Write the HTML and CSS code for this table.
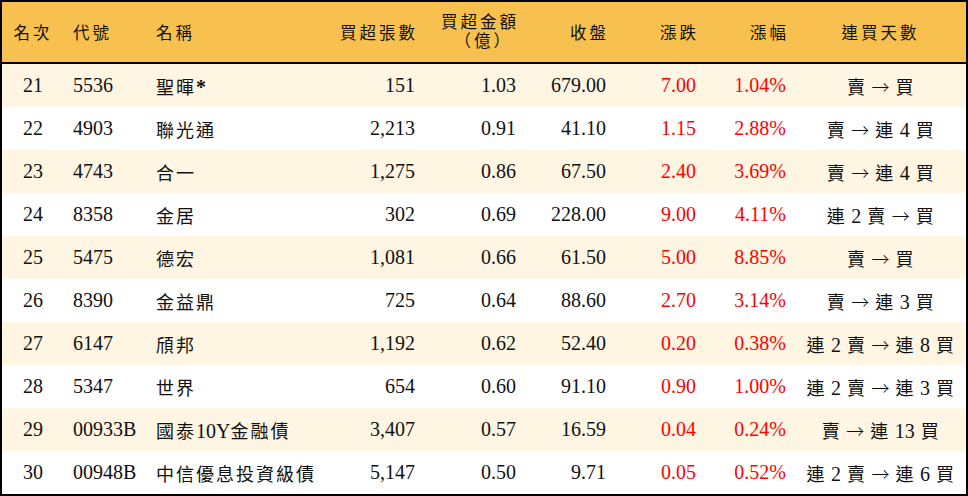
FILE: index.html
```html
<!DOCTYPE html>
<html lang="zh-Hant">
<head>
<meta charset="utf-8">
<title>買超排行</title>
<link rel="stylesheet" href="styles.css">
</head>
<body>
<div class="board">
  <div class="head">
    <div class="c ctr">名次</div>
    <div class="c lft">代號</div>
    <div class="c lft nm">名稱</div>
    <div class="c rgt">買超張數</div>
    <div class="c rgt two"><span>買超金額</span><span class="unit">（億）</span></div>
    <div class="c rgt">收盤</div>
    <div class="c rgt">漲跌</div>
    <div class="c rgt">漲幅</div>
    <div class="c ctr">連買天數</div>
  </div>
  <div class="row alt"><div class="c ctr n">21</div><div class="c lft n">5536</div><div class="c lft nm">聖暉<span class="ast">*</span></div><div class="c rgt n">151</div><div class="c rgt n">1.03</div><div class="c rgt n">679.00</div><div class="c rgt n up">7.00</div><div class="c rgt n up">1.04%</div><div class="c ctr streak">賣 <span class="ar">→</span> 買</div></div>
  <div class="row"><div class="c ctr n">22</div><div class="c lft n">4903</div><div class="c lft nm">聯光通</div><div class="c rgt n">2,213</div><div class="c rgt n">0.91</div><div class="c rgt n">41.10</div><div class="c rgt n up">1.15</div><div class="c rgt n up">2.88%</div><div class="c ctr streak">賣 <span class="ar">→</span> 連 <span class="d">4</span> 買</div></div>
  <div class="row alt"><div class="c ctr n">23</div><div class="c lft n">4743</div><div class="c lft nm">合一</div><div class="c rgt n">1,275</div><div class="c rgt n">0.86</div><div class="c rgt n">67.50</div><div class="c rgt n up">2.40</div><div class="c rgt n up">3.69%</div><div class="c ctr streak">賣 <span class="ar">→</span> 連 <span class="d">4</span> 買</div></div>
  <div class="row"><div class="c ctr n">24</div><div class="c lft n">8358</div><div class="c lft nm">金居</div><div class="c rgt n">302</div><div class="c rgt n">0.69</div><div class="c rgt n">228.00</div><div class="c rgt n up">9.00</div><div class="c rgt n up">4.11%</div><div class="c ctr streak">連 <span class="d">2</span> 賣 <span class="ar">→</span> 買</div></div>
  <div class="row alt"><div class="c ctr n">25</div><div class="c lft n">5475</div><div class="c lft nm">德宏</div><div class="c rgt n">1,081</div><div class="c rgt n">0.66</div><div class="c rgt n">61.50</div><div class="c rgt n up">5.00</div><div class="c rgt n up">8.85%</div><div class="c ctr streak">賣 <span class="ar">→</span> 買</div></div>
  <div class="row"><div class="c ctr n">26</div><div class="c lft n">8390</div><div class="c lft nm">金益鼎</div><div class="c rgt n">725</div><div class="c rgt n">0.64</div><div class="c rgt n">88.60</div><div class="c rgt n up">2.70</div><div class="c rgt n up">3.14%</div><div class="c ctr streak">賣 <span class="ar">→</span> 連 <span class="d">3</span> 買</div></div>
  <div class="row alt"><div class="c ctr n">27</div><div class="c lft n">6147</div><div class="c lft nm">頎邦</div><div class="c rgt n">1,192</div><div class="c rgt n">0.62</div><div class="c rgt n">52.40</div><div class="c rgt n up">0.20</div><div class="c rgt n up">0.38%</div><div class="c ctr streak">連 <span class="d">2</span> 賣 <span class="ar">→</span> 連 <span class="d">8</span> 買</div></div>
  <div class="row"><div class="c ctr n">28</div><div class="c lft n">5347</div><div class="c lft nm">世界</div><div class="c rgt n">654</div><div class="c rgt n">0.60</div><div class="c rgt n">91.10</div><div class="c rgt n up">0.90</div><div class="c rgt n up">1.00%</div><div class="c ctr streak">連 <span class="d">2</span> 賣 <span class="ar">→</span> 連 <span class="d">3</span> 買</div></div>
  <div class="row alt"><div class="c ctr n">29</div><div class="c lft n">00933B</div><div class="c lft nm">國泰<span class="lat">10Y</span>金融債</div><div class="c rgt n">3,407</div><div class="c rgt n">0.57</div><div class="c rgt n">16.59</div><div class="c rgt n up">0.04</div><div class="c rgt n up">0.24%</div><div class="c ctr streak">賣 <span class="ar">→</span> 連 <span class="d">13</span> 買</div></div>
  <div class="row"><div class="c ctr n">30</div><div class="c lft n">00948B</div><div class="c lft nm">中信優息投資級債</div><div class="c rgt n">5,147</div><div class="c rgt n">0.50</div><div class="c rgt n">9.71</div><div class="c rgt n up">0.05</div><div class="c rgt n up">0.52%</div><div class="c ctr streak">連 <span class="d">2</span> 賣 <span class="ar">→</span> 連 <span class="d">6</span> 買</div></div>
</div>
</body>
</html>
```
FILE: styles.css
```css
html, body {
  margin: 0;
  padding: 0;
  background: #ffffff;
}
body {
  font-family: "Liberation Serif", "Noto Sans CJK TC", serif;
  color: #111111;
}
.board {
  width: 968px;
  height: 496px;
  box-sizing: border-box;
  border: 2px solid #000000;
  background: #ffffff;
}
.head, .row {
  display: grid;
  grid-template-columns: 62px 86px 180px 94px 101px 90px 90px 90px 171px;
  align-items: center;
}
.head {
  height: 60px;
  border-bottom: 2px solid #000000;
  background: #f8c14f;
  font-size: 16.5px;
  letter-spacing: 3px;
}
.row {
  height: 43px;
  font-size: 18px;
}
.row.alt {
  background: #fef5e2;
}
.c {
  white-space: nowrap;
}
.ctr {
  text-align: center;
}
.lft {
  text-align: left;
  padding-left: 9px;
}
.lft.nm {
  padding-left: 6px;
}
.rgt {
  text-align: right;
  padding-right: 9px;
}
.head .rgt {
  padding-right: 6px;
}
.two {
  display: flex;
  flex-direction: column;
  align-items: flex-end;
  line-height: 19px;
}
.two .unit {
  padding-right: 6px;
}
.n {
  font-size: 20px;
}
.row .nm {
  letter-spacing: 2px;
}
.lat {
  font-size: 20px;
  letter-spacing: 0;
}
.ast {
  font-size: 20px;
  font-weight: bold;
}
.up {
  color: #ff0000;
}
.streak {
  font-size: 18px;
  letter-spacing: 0.5px;
  word-spacing: 1px;
}
.streak .d {
  font-size: 20px;
  letter-spacing: 0;
}
.streak .ar {
  font-family: "Noto Sans CJK TC", sans-serif;
  font-size: 18px;
  font-weight: 300;
  letter-spacing: 0;
}
```
